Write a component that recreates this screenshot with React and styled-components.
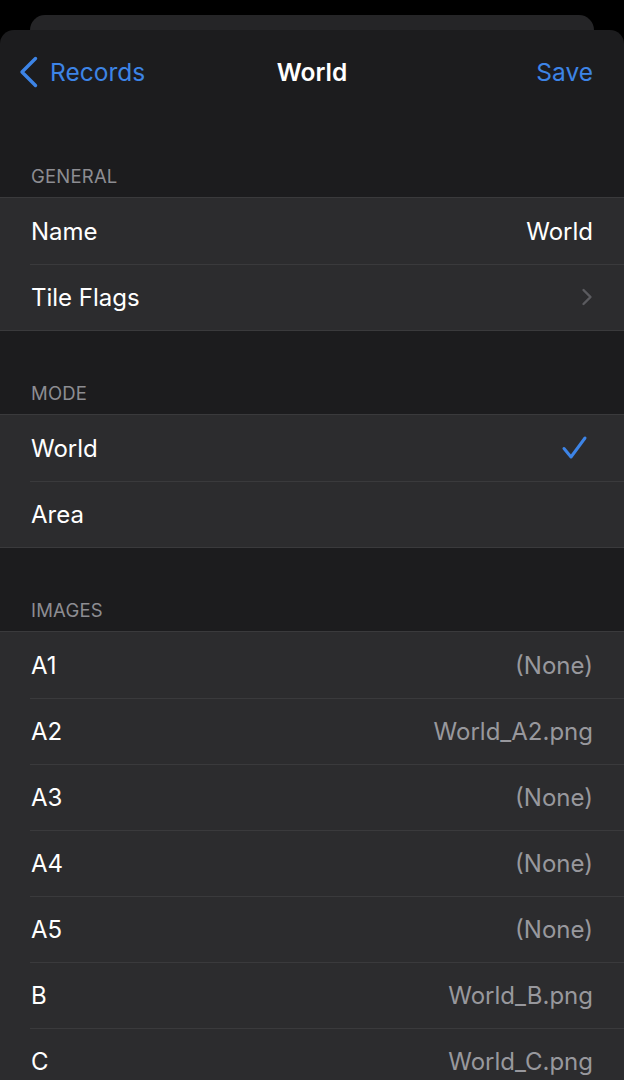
import React from 'react';
import styled, { createGlobalStyle } from 'styled-components';

const GlobalStyle = createGlobalStyle`
  html, body {
    margin: 0;
    background: #000;
  }
  body {
    font-family: Inter, "Liberation Sans", sans-serif;
    -webkit-font-smoothing: antialiased;
  }
`;

const Page = styled.div`
  padding-top: 15px;
  min-height: 1080px;
  box-sizing: border-box;
  display: flex;
  flex-direction: column;
`;

const BackCard = styled.div`
  margin: 0 30px;
  height: 15px;
  background: #252527;
  border-radius: 16px 16px 0 0;
`;

const Sheet = styled.div`
  flex: 1;
  background: #1c1c1e;
  border-radius: 14px 14px 0 0;
  overflow: hidden;
`;

const NavBar = styled.div`
  height: 84px;
  display: grid;
  grid-template-columns: 1fr auto 1fr;
  align-items: center;
  padding: 0 31px;
`;

const BackButton = styled.div`
  display: flex;
  align-items: center;
  gap: 11px;
  margin-left: -12px;
  color: #3d84e6;
  font-size: 24.5px;
`;

const Title = styled.div`
  color: #fff;
  font-size: 24.5px;
  font-weight: 600;
`;

const SaveButton = styled.div`
  justify-self: end;
  color: #3d84e6;
  font-size: 24.5px;
`;

const SectionHeader = styled.div`
  height: 83px;
  box-sizing: border-box;
  display: flex;
  align-items: flex-end;
  padding: 0 31px 10px;
  color: #8d8d92;
  font-size: 18.5px;
  line-height: 22px;
  letter-spacing: 0.2px;
`;

const Group = styled.div`
  background: #2c2c2e;
  border-top: 1px solid #3a3a3c;
  border-bottom: 1px solid #3a3a3c;
`;

const Row = styled.div`
  height: 66px;
  display: flex;
  align-items: center;
  justify-content: space-between;
  padding: 0 31px;
  & + & {
    box-shadow: inset 30px 0 0 #2c2c2e, inset 0 1px 0 #3a3a3c;
  }
`;

const Label = styled.span`
  color: #fff;
  font-size: 24px;
`;

const Value = styled.span`
  color: ${(p) => (p.$dim ? '#98989d' : '#fff')};
  font-size: 24px;
`;

const Check = () => (
  <svg width="28" height="26" viewBox="0 0 28 26" style={{ marginRight: 4 }}>
    <path d="M3 13.5 L10 22 L24 3" fill="none" stroke="#3d84e6" strokeWidth="3" strokeLinecap="round" strokeLinejoin="round" />
  </svg>
);

const Chevron = () => (
  <svg width="12" height="18" viewBox="0 0 12 18">
    <path d="M2.5 2 L9.5 9 L2.5 16" fill="none" stroke="#5b5b5f" strokeWidth="2.4" strokeLinecap="round" strokeLinejoin="round" />
  </svg>
);

const BackChevron = () => (
  <svg width="20" height="32" viewBox="0 0 20 32">
    <path d="M16.5 2.5 L3 16 L16.5 29.5" fill="none" stroke="#3d84e6" strokeWidth="3.4" strokeLinecap="round" strokeLinejoin="round" />
  </svg>
);

const images = [
  ['A1', '(None)'],
  ['A2', 'World_A2.png'],
  ['A3', '(None)'],
  ['A4', '(None)'],
  ['A5', '(None)'],
  ['B', 'World_B.png'],
  ['C', 'World_C.png'],
];

export default function App() {
  return (
    <>
      <GlobalStyle />
      <Page>
        <BackCard />
        <Sheet>
          <NavBar>
            <BackButton>
              <BackChevron />
              Records
            </BackButton>
            <Title>World</Title>
            <SaveButton>Save</SaveButton>
          </NavBar>

          <SectionHeader>GENERAL</SectionHeader>
          <Group>
            <Row>
              <Label>Name</Label>
              <Value>World</Value>
            </Row>
            <Row>
              <Label>Tile Flags</Label>
              <Chevron />
            </Row>
          </Group>

          <SectionHeader>MODE</SectionHeader>
          <Group>
            <Row>
              <Label>World</Label>
              <Check />
            </Row>
            <Row>
              <Label>Area</Label>
            </Row>
          </Group>

          <SectionHeader>IMAGES</SectionHeader>
          <Group>
            {images.map(([name, file]) => (
              <Row key={name}>
                <Label>{name}</Label>
                <Value $dim>{file}</Value>
              </Row>
            ))}
          </Group>
        </Sheet>
      </Page>
    </>
  );
}
